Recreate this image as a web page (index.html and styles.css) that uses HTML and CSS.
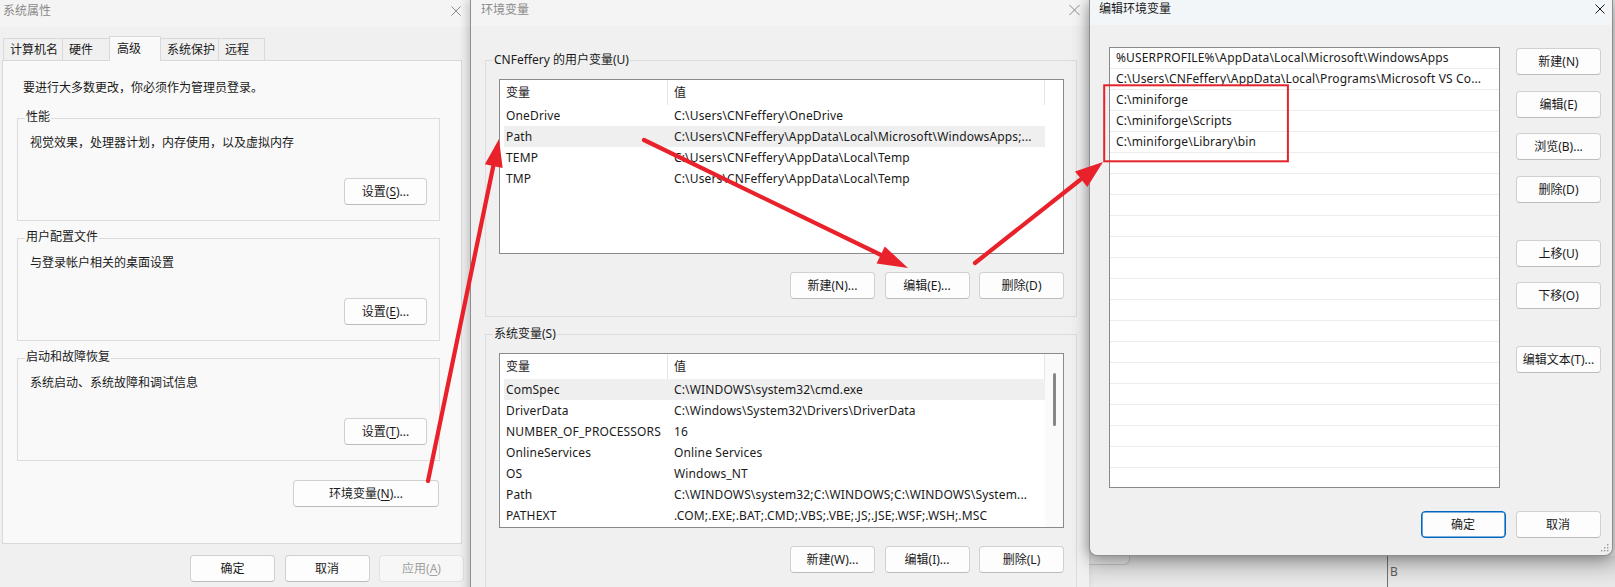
FILE: index.html
```html
<!DOCTYPE html>
<html lang="zh-CN">
<head>
<meta charset="utf-8">
<title>环境变量</title>
<link rel="stylesheet" href="styles.css">
</head>
<body>
<div class="desk">

  <div class="backdrop">
    <div class="bd-corner"></div>
    <div class="bd-col">B</div>
  </div>

  <!-- 系统属性 -->
  <section class="win w-sys">
    <header class="titlebar tb-sys">
      <span class="title">系统属性</span>
      <span class="close"><svg width="10" height="10" viewBox="0 0 10 10"><path d="M0.5 0.5L9.5 9.5M9.5 0.5L0.5 9.5" stroke="currentColor" stroke-width="1" fill="none"/></svg></span>
    </header>
    <nav class="tabs">
      <span class="tab">计算机名</span>
      <span class="tab">硬件</span>
      <span class="tab sel">高级</span>
      <span class="tab">系统保护</span>
      <span class="tab">远程</span>
    </nav>
    <div class="panel">
      <p class="note">要进行大多数更改，你必须作为管理员登录。</p>
      <div class="group">
        <div class="glabel">性能</div>
        <p class="gdesc">视觉效果，处理器计划，内存使用，以及虚拟内存</p>
        <div class="gbtns"><button class="btn btn-set">设置(<u>S</u>)...</button></div>
      </div>
      <div class="group">
        <div class="glabel">用户配置文件</div>
        <p class="gdesc">与登录帐户相关的桌面设置</p>
        <div class="gbtns"><button class="btn btn-set">设置(<u>E</u>)...</button></div>
      </div>
      <div class="group">
        <div class="glabel">启动和故障恢复</div>
        <p class="gdesc">系统启动、系统故障和调试信息</p>
        <div class="gbtns"><button class="btn btn-set">设置(<u>T</u>)...</button></div>
      </div>
      <div class="envrow"><button class="btn btn-env">环境变量(<u>N</u>)...</button></div>
    </div>
    <footer class="sysfoot">
      <button class="btn">确定</button>
      <button class="btn">取消</button>
      <button class="btn dis">应用(<u>A</u>)</button>
    </footer>
  </section>

  <!-- 环境变量 -->
  <section class="win w-env">
    <header class="titlebar tb-env">
      <span class="title">环境变量</span>
      <span class="close"><svg width="11" height="10" viewBox="0 0 11 10"><path d="M0.5 0L10.5 10M10.5 0L0.5 10" stroke="currentColor" stroke-width="1" fill="none"/></svg></span>
    </header>
    <div class="envbody">
      <div class="egroup">
        <div class="glabel">CNFeffery 的用户变量(U)</div>
        <div class="lv">
          <div class="lv-main">
            <div class="lv-head"><span class="h1">变量</span><span class="h2">值</span></div>
            <div class="lv-row"><span class="c1">OneDrive</span><span class="c2">C:\Users\CNFeffery\OneDrive</span></div>
            <div class="lv-row hl"><span class="c1">Path</span><span class="c2">C:\Users\CNFeffery\AppData\Local\Microsoft\WindowsApps;...</span></div>
            <div class="lv-row"><span class="c1">TEMP</span><span class="c2">C:\Users\CNFeffery\AppData\Local\Temp</span></div>
            <div class="lv-row"><span class="c1">TMP</span><span class="c2">C:\Users\CNFeffery\AppData\Local\Temp</span></div>
          </div>
          <div class="lv-side"></div>
        </div>
        <div class="ebtns">
          <button class="btn">新建(N)...</button>
          <button class="btn">编辑(E)...</button>
          <button class="btn">删除(D)</button>
        </div>
      </div>
      <div class="egroup">
        <div class="glabel">系统变量(S)</div>
        <div class="lv">
          <div class="lv-main">
            <div class="lv-head"><span class="h1">变量</span><span class="h2">值</span></div>
            <div class="lv-row hl"><span class="c1">ComSpec</span><span class="c2">C:\WINDOWS\system32\cmd.exe</span></div>
            <div class="lv-row"><span class="c1">DriverData</span><span class="c2">C:\Windows\System32\Drivers\DriverData</span></div>
            <div class="lv-row"><span class="c1">NUMBER_OF_PROCESSORS</span><span class="c2">16</span></div>
            <div class="lv-row"><span class="c1">OnlineServices</span><span class="c2">Online Services</span></div>
            <div class="lv-row"><span class="c1">OS</span><span class="c2">Windows_NT</span></div>
            <div class="lv-row"><span class="c1">Path</span><span class="c2">C:\WINDOWS\system32;C:\WINDOWS;C:\WINDOWS\System...</span></div>
            <div class="lv-row"><span class="c1">PATHEXT</span><span class="c2">.COM;.EXE;.BAT;.CMD;.VBS;.VBE;.JS;.JSE;.WSF;.WSH;.MSC</span></div>
          </div>
          <div class="lv-side track"><div class="thumb"></div></div>
        </div>
        <div class="ebtns">
          <button class="btn">新建(W)...</button>
          <button class="btn">编辑(I)...</button>
          <button class="btn">删除(L)</button>
        </div>
      </div>
    </div>
  </section>

  <!-- 编辑环境变量 -->
  <section class="win w-edit">
    <header class="titlebar tb-edit">
      <span class="title">编辑环境变量</span>
      <span class="close"><svg width="10" height="10" viewBox="0 0 10 10"><path d="M0.5 0.5L9.5 9.5M9.5 0.5L0.5 9.5" stroke="currentColor" stroke-width="1" fill="none"/></svg></span>
    </header>
    <div class="ebody">
      <div class="elist">
        <div class="erow">%USERPROFILE%\AppData\Local\Microsoft\WindowsApps</div>
        <div class="erow">C:\Users\CNFeffery\AppData\Local\Programs\Microsoft VS Co...</div>
        <div class="erow">C:\miniforge</div>
        <div class="erow">C:\miniforge\Scripts</div>
        <div class="erow">C:\miniforge\Library\bin</div>
        <div class="erow"></div>
        <div class="erow"></div>
        <div class="erow"></div>
        <div class="erow"></div>
        <div class="erow"></div>
        <div class="erow"></div>
        <div class="erow"></div>
        <div class="erow"></div>
        <div class="erow"></div>
        <div class="erow"></div>
        <div class="erow"></div>
        <div class="erow"></div>
        <div class="erow"></div>
        <div class="erow"></div>
        <div class="erow"></div>
        <div class="erow"></div>
      </div>
      <div class="ecol">
        <button class="btn">新建(N)</button>
        <button class="btn g16">编辑(E)</button>
        <button class="btn g16">浏览(B)...</button>
        <button class="btn g16">删除(D)</button>
        <button class="btn g37">上移(U)</button>
        <button class="btn g14">下移(O)</button>
        <button class="btn g37">编辑文本(T)...</button>
      </div>
    </div>
    <footer class="efoot">
      <button class="btn def">确定</button>
      <button class="btn">取消</button>
    </footer>
    <svg class="grip" width="8" height="8" viewBox="0 0 8 8"><g fill="#9a9a9a"><rect x="6" y="0" width="1.4" height="1.4"/><rect x="3" y="3" width="1.4" height="1.4"/><rect x="6" y="3" width="1.4" height="1.4"/><rect x="0" y="6" width="1.4" height="1.4"/><rect x="3" y="6" width="1.4" height="1.4"/><rect x="6" y="6" width="1.4" height="1.4"/></g></svg>
  </section>

  <svg class="marks" width="1615" height="587" viewBox="0 0 1615 587">
    <g stroke="#e8212b" stroke-width="4.2" stroke-linecap="round" fill="none">
      <line x1="428" y1="481" x2="493.3" y2="166"/>
      <line x1="644" y1="140" x2="880" y2="254.5"/>
      <line x1="975" y1="263" x2="1080" y2="180"/>
    </g>
    <g fill="#e8212b">
      <polygon points="499,139 502.6,168 484.9,164.2"/>
      <polygon points="908,268 876.6,263.5 884.8,246.5"/>
      <polygon points="1103,162 1087.3,187 1075,171.6"/>
    </g>
    <rect x="1104.2" y="85.3" width="183.7" height="76" fill="none" stroke="#e3242b" stroke-width="2"/>
  </svg>

</div>
</body>
</html>
```

FILE: styles.css
```css
* { box-sizing: border-box; }
html, body { margin: 0; padding: 0; }
body {
  width: 1615px;
  height: 587px;
  overflow: hidden;
  background: #dedede;
  font-family: "Noto Sans", "Noto Sans CJK SC", sans-serif;
  font-size: 12px;
  color: #1a1a1a;
}
.desk { position: relative; width: 1615px; height: 587px; overflow: hidden; }

/* background under the edit dialog */
.backdrop {
  position: absolute;
  left: 1089px;
  top: 556px;
  width: 526px;
  height: 31px;
  display: flex;
  align-items: flex-start;
  background: linear-gradient(#d3d3d3, #e9e9e9);
}
.bd-corner {
  width: 41px;
  height: 9px;
  background: #dedede;
  border-right: 1px solid #bdbdbd;
  border-bottom: 1px solid #bdbdbd;
  border-radius: 0 0 6px 0;
}
.bd-col {
  margin-left: 257px;
  height: 31px;
  padding: 8px 0 0 2px;
  line-height: 16px;
  border-left: 1px solid #6f6f6f;
  color: #5a5a5a;
}

/* windows */
.win { position: absolute; top: 0; background: #f0f0f0; }
.w-sys { left: 0; width: 470px; height: 600px; z-index: 1; }
.w-env {
  left: 470px; width: 619px; height: 600px; z-index: 2;
  border-left: 1px solid #8e8e8e;
  box-shadow: -3px 0 8px rgba(0,0,0,0.18);
}
.w-edit {
  left: 1089px; width: 524px; z-index: 3;
  border: 1px solid #8e8e8e;
  border-top: 0;
  border-radius: 0 0 8px 8px;
  box-shadow: 0 6px 18px rgba(0,0,0,0.3), -3px 0 8px rgba(0,0,0,0.15);
}

.titlebar { display: flex; align-items: flex-start; background: #f4f4f4; color: #8a8a8a; }
.title { line-height: 16px; white-space: nowrap; }
.close { margin-left: auto; display: flex; align-items: center; justify-content: center; }

.tb-sys { height: 27px; }
.tb-sys .title { padding: 3px 0 0 3px; }
.tb-sys .close { width: 28px; height: 22px; color: #8a8a8a; }

.tb-env { height: 26px; }
.tb-env .title { padding: 2px 0 0 10px; }
.tb-env .close { width: 30px; height: 20px; color: #8a8a8a; }

.tb-edit { height: 25px; background: #f3f6f9; color: #1a1a1a; }
.tb-edit .title { padding: 1px 0 0 9px; }
.tb-edit .close { width: 24px; height: 18px; color: #1a1a1a; }

/* buttons */
.btn {
  width: 85px;
  height: 27px;
  padding: 0;
  border: 1px solid #d0d0d0;
  border-bottom-color: #bcbcbc;
  border-radius: 4px;
  background: #fdfdfd;
  font-family: inherit;
  font-size: 12px;
  line-height: 25px;
  color: #1a1a1a;
  text-align: center;
  white-space: nowrap;
}
.btn u { text-underline-offset: 2px; }
.btn.dis { color: #a0a0a0; background: #f7f7f7; border-color: #e2e2e2; }
.btn.def { border-color: #0067c0; box-shadow: inset 0 0 0 0.6px #0067c0; }
.btn-set { width: 83px; }
.btn-env { width: 146px; }

/* tabs */
.tabs {
  display: flex;
  align-items: flex-end;
  height: 24px;
  margin-top: 9px;
  padding-left: 3px;
}
.tab {
  height: 22px;
  line-height: 22px;
  padding-left: 6px;
  border: 1px solid #d9d9d9;
  border-bottom: 0;
  margin-right: -1px;
  background: #f0f0f0;
  white-space: nowrap;
}
.tab.sel {
  height: 25px;
  line-height: 24px;
  margin-bottom: -1px;
  padding-left: 7px;
  background: #f9f9f9;
  position: relative;
  z-index: 1;
}
.tab:nth-child(1) { width: 60px; }
.tab:nth-child(2) { width: 48px; }
.tab:nth-child(3) { width: 52px; }
.tab:nth-child(4) { width: 59px; }
.tab:nth-child(5) { width: 47px; }

.panel {
  width: 460px;
  height: 484px;
  margin-left: 2px;
  border: 1px solid #d9d9d9;
  background: #f9f9f9;
  overflow: hidden;
}
.note { margin: 19px 0 22px 20px; line-height: 16px; }
.group {
  height: 103px;
  margin: 0 21px 0 14px;
  border: 1px solid #dcdcdc;
}
.group + .group { margin-top: 17px; }
.glabel {
  display: table;
  margin: -10px 0 0 7px;
  padding: 0 1px;
  line-height: 16px;
  background: #f9f9f9;
  white-space: nowrap;
}
.gdesc { margin: 10px 0 0 12px; line-height: 16px; }
.gbtns { display: flex; justify-content: flex-end; margin: 27px 12px 0 0; }
.envrow { display: flex; justify-content: flex-end; margin: 19px 22px 0 0; }
.sysfoot { display: flex; gap: 9.5px; margin-top: 11px; padding-left: 190px; }

/* environment variables window */
.envbody { padding: 34px 12px 0 14px; }
.egroup { border: 1px solid #dcdcdc; padding-bottom: 17px; }
.egroup + .egroup { margin-top: 17px; }
.egroup .glabel { margin: -9px 0 0 7px; background: #f0f0f0; }
.lv {
  display: flex;
  height: 175px;
  margin: 11px 12px 0 13px;
  border: 1px solid #8a8a8a;
  background: #fff;
  overflow: hidden;
}
.lv-main { flex: 1; min-width: 0; }
.lv-side { width: 18px; flex: none; }
.lv-side.track { background: #fafafa; padding-top: 19px; }
.thumb { width: 3px; height: 53px; margin-left: 8px; border-radius: 2px; background: #878787; }
.lv-head { display: flex; height: 25px; line-height: 25px; }
.h1 { width: 168px; padding-left: 6px; border-right: 1px solid #e5e5e5; }
.h2 { flex: 1; padding-left: 6px; border-right: 1px solid #e5e5e5; }
.lv-row { display: flex; height: 21px; line-height: 21px; margin-left: 4px; white-space: nowrap; }
.lv-row.hl { background: #efefef; }
.c1 { width: 164px; flex: none; padding-left: 2px; overflow: hidden; letter-spacing: 0.15px; }
.c2 { flex: 1; padding-left: 6px; overflow: hidden; letter-spacing: 0.15px; }
.ebtns { display: flex; justify-content: flex-end; gap: 9.5px; margin: 18px 12px 0 0; }

/* edit window */
.ebody { display: flex; gap: 16px; padding: 22px 0 0 19px; }
.elist {
  width: 391px;
  height: 441px;
  border: 1px solid #8a8a8a;
  background: #fff;
  overflow: hidden;
}
.erow {
  height: 21px;
  line-height: 20px;
  padding-left: 6px;
  border-bottom: 1px solid #ececec;
  white-space: nowrap;
  overflow: hidden;
  letter-spacing: 0.15px;
}
.ecol { display: flex; flex-direction: column; padding-top: 1px; }
.ecol .g16 { margin-top: 15.7px; }
.ecol .g37 { margin-top: 37px; }
.ecol .g14 { margin-top: 14.5px; }
.efoot { display: flex; justify-content: flex-end; gap: 10px; padding: 23px 11.5px 17px 0; }
.grip { position: absolute; right: 3px; bottom: 3px; }

.marks { position: absolute; left: 0; top: 0; z-index: 10; pointer-events: none; }
```
